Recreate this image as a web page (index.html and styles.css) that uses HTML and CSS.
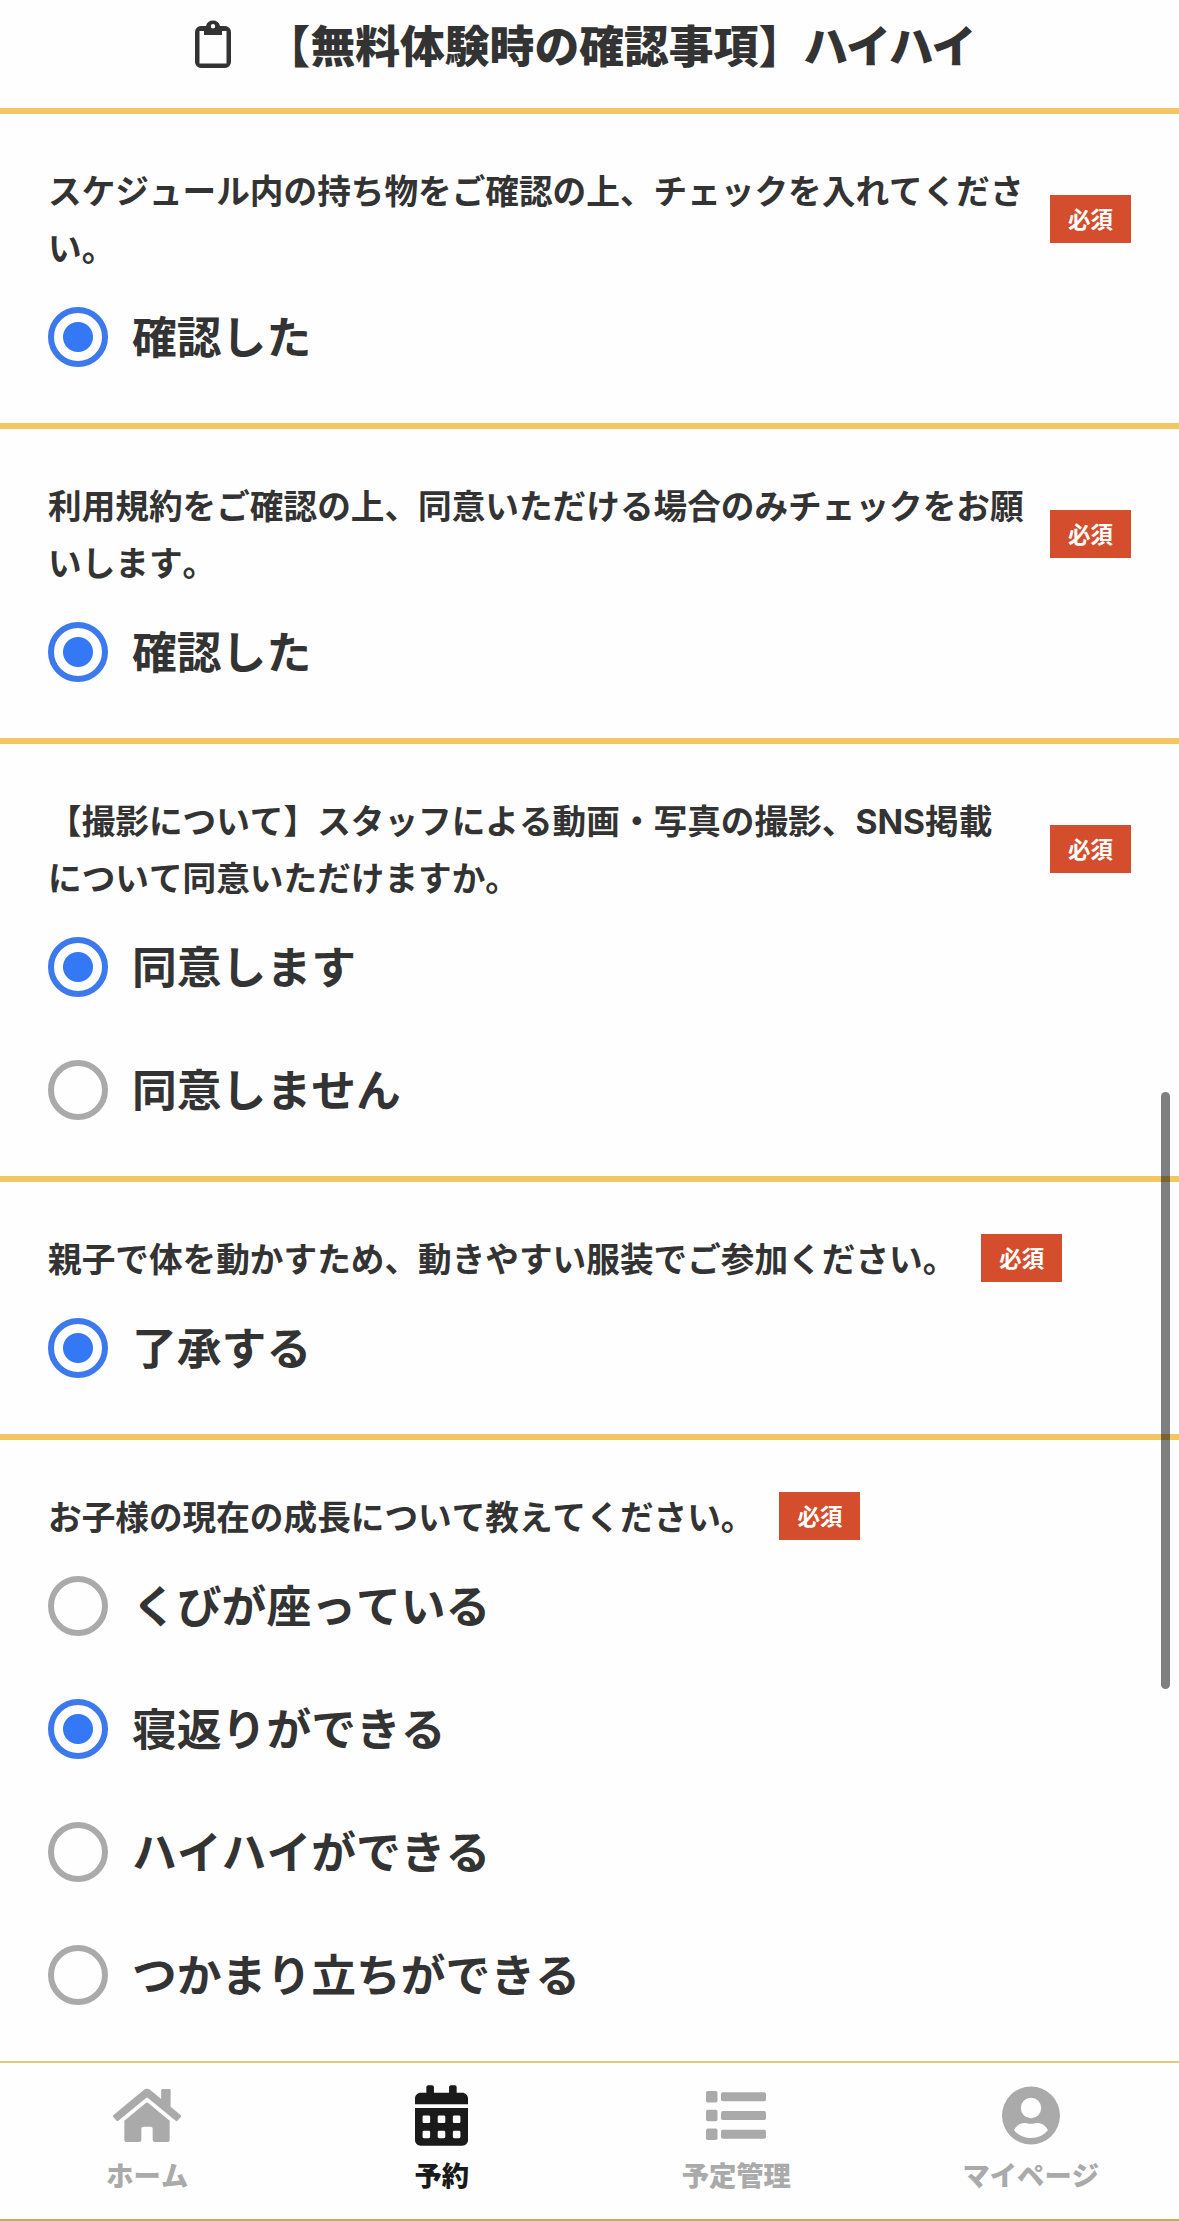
FILE: index.html
```html
<!DOCTYPE html>
<html lang="ja">
<head>
  <meta charset="UTF-8">
  <meta name="viewport" content="width=device-width, initial-scale=1.0">
  <title>無料体験時の確認事項</title>
  <link rel="stylesheet" href="styles.css">
</head>
<body>

  <header class="page-header">
    <svg class="clipboard" viewBox="0 0 36 50">
      <path d="M6 6H11A7.2 7.2 0 0 1 25 6H30A6 6 0 0 1 36 12V42A6 6 0 0 1 30 48H6A6 6 0 0 1 0 42V12A6 6 0 0 1 6 6ZM4.5 11V43.500H31.500V11H27V15H9V11ZM18 4A2.200 2.200 0 1 0 18 8.400A2.200 2.200 0 1 0 18 4Z" fill-rule="evenodd"/>
    </svg>
    <h1>【無料体験時の確認事項】<span class="kana">ハイハイ</span></h1>
  </header>

  <form class="survey">
    <!-- 持ち物 -->
    <section class="question">
      <div class="question-title">
        <p>スケジュール内の持ち物をご確認の上、チェックを入れてください。</p>
        <span class="required">必須</span>
      </div>
      <label class="option"><input type="radio" name="q1" checked><span>確認した</span></label>
    </section>

    <!-- 利用規約 -->
    <section class="question">
      <div class="question-title">
        <p>利用規約をご確認の上、同意いただける場合のみチェックをお願いします。</p>
        <span class="required">必須</span>
      </div>
      <label class="option"><input type="radio" name="q2" checked><span>確認した</span></label>
    </section>

    <!-- 撮影 -->
    <section class="question">
      <div class="question-title">
        <p>【撮影について】スタッフによる動画・写真の撮影、SNS掲載について同意いただけますか。</p>
        <span class="required">必須</span>
      </div>
      <label class="option"><input type="radio" name="q3" checked><span>同意します</span></label>
      <label class="option"><input type="radio" name="q3"><span>同意しません</span></label>
    </section>

    <!-- 服装 -->
    <section class="question">
      <div class="question-title">
        <p>親子で体を動かすため、動きやすい服装でご参加ください。</p>
        <span class="required">必須</span>
      </div>
      <label class="option"><input type="radio" name="q4" checked><span>了承する</span></label>
    </section>

    <!-- 成長 -->
    <section class="question">
      <div class="question-title">
        <p>お子様の現在の成長について教えてください。</p>
        <span class="required">必須</span>
      </div>
      <label class="option"><input type="radio" name="q5"><span>くびが座っている</span></label>
      <label class="option"><input type="radio" name="q5" checked><span>寝返りができる</span></label>
      <label class="option"><input type="radio" name="q5"><span>ハイハイができる</span></label>
      <label class="option"><input type="radio" name="q5"><span>つかまり立ちができる</span></label>
    </section>
  </form>

  <div class="scrollbar"></div>

  <nav class="tab-bar">
    <a class="tab">
      <svg class="icon-home" viewBox="0 0 576 512"><path d="M280.37 148.26L96 300.11V464a16 16 0 0 0 16 16l112.06-.29a16 16 0 0 0 15.92-16V368a16 16 0 0 1 16-16h64a16 16 0 0 1 16 16v95.64a16 16 0 0 0 16 16.05L464 480a16 16 0 0 0 16-16V300L295.67 148.26a12.19 12.19 0 0 0-15.3 0zM571.6 251.47L488 182.56V44.05a12 12 0 0 0-12-12h-56a12 12 0 0 0-12 12v72.61L318.47 43a48 48 0 0 0-61 0L4.34 251.47a12 12 0 0 0-1.6 16.9l25.5 31A12 12 0 0 0 45.15 301l235.22-193.74a12.19 12.19 0 0 1 15.3 0L530.9 301a12 12 0 0 0 16.9-1.6l25.5-31a12 12 0 0 0-1.7-16.93z"/></svg>
      <span>ホーム</span>
    </a>
    <a class="tab active">
      <svg class="icon-calendar" viewBox="0 0 448 512"><path d="M0 464c0 26.500 21.500 48 48 48h352c26.500 0 48-21.500 48-48V192H0v272zm320-196c0-6.600 5.400-12 12-12h40c6.600 0 12 5.400 12 12v40c0 6.600-5.400 12-12 12h-40c-6.600 0-12-5.400-12-12v-40zm0 128c0-6.600 5.400-12 12-12h40c6.600 0 12 5.400 12 12v40c0 6.600-5.400 12-12 12h-40c-6.600 0-12-5.400-12-12v-40zM192 268c0-6.600 5.400-12 12-12h40c6.600 0 12 5.400 12 12v40c0 6.600-5.400 12-12 12h-40c-6.600 0-12-5.400-12-12v-40zm0 128c0-6.600 5.400-12 12-12h40c6.600 0 12 5.400 12 12v40c0 6.600-5.400 12-12 12h-40c-6.600 0-12-5.400-12-12v-40zM64 268c0-6.600 5.400-12 12-12h40c6.600 0 12 5.400 12 12v40c0 6.600-5.400 12-12 12H76c-6.600 0-12-5.400-12-12v-40zm0 128c0-6.600 5.400-12 12-12h40c6.600 0 12 5.400 12 12v40c0 6.600-5.400 12-12 12H76c-6.600 0-12-5.400-12-12v-40zM400 64h-48V16c0-8.800-7.200-16-16-16h-32c-8.800 0-16 7.200-16 16v48H160V16c0-8.800-7.200-16-16-16h-32c-8.800 0-16 7.200-16 16v48H48C21.500 64 0 85.500 0 112v48h448v-48c0-26.500-21.500-48-48-48z"/></svg>
      <span>予約</span>
    </a>
    <a class="tab">
      <svg class="icon-list" viewBox="0 0 60 50">
        <rect x="0" y="0.500" width="11.500" height="11.500" rx="1.800"/>
        <rect x="0" y="19.300" width="11.500" height="11.500" rx="1.800"/>
        <rect x="0" y="38" width="11.500" height="11.500" rx="1.800"/>
        <rect x="15" y="1.800" width="45" height="9" rx="1.800"/>
        <rect x="15" y="20.600" width="45" height="9" rx="1.800"/>
        <rect x="15" y="39.300" width="45" height="9" rx="1.800"/>
      </svg>
      <span>予定管理</span>
    </a>
    <a class="tab">
      <svg class="icon-user" viewBox="0 0 58 58"><path fill-rule="evenodd" d="M29 0A29 29 0 1 0 29 58A29 29 0 1 0 29 0ZM29 11.300A10.200 10.200 0 1 1 29 31.700A10.200 10.200 0 1 1 29 11.300ZM12 43.500C14.500 39 18.500 36.500 22.500 36.500C25 36.500 26 37.300 29 37.300C32 37.300 33 36.500 35.500 36.500C39.500 36.500 43.500 39 46 43.500C42 48.700 36 51.500 29 51.500C22 51.500 16 48.700 12 43.500Z"/></svg>
      <span>マイページ</span>
    </a>
  </nav>

</body>
</html>
```
FILE: styles.css
```css
* {
  box-sizing: border-box;
}
body {
  margin: 0;
  height: 2221px;
  overflow: hidden;
  display: flex;
  flex-direction: column;
  font-family: "Noto Sans CJK JP", sans-serif;
  font-weight: 700;
  font-kerning: none;
  background-color: #fefefe;
  color: #333;
}
.page-header {
  display: flex;
  justify-content: center;
  height: 114px;
  padding: 20px 10px 0 0;
  border-bottom: 6px solid #f2c661;
  flex: none;
}
.clipboard {
  width: 36px;
  height: 50px;
  margin-right: 35px;
  fill: #333;
}
h1 {
  margin: -3px 0 0;
  font-size: 44.800px;
  font-weight: 900;
  line-height: 54px;
}
.kana {
  letter-spacing: -2px;
}
.survey {
  flex: 1;
  min-height: 0;
  overflow: hidden;
}
.question {
  padding: 48px 48px 56px;
  border-bottom: 6px solid #f2c661;
}
.question-title {
  display: flex;
  align-items: center;
  gap: 25px;
  margin-bottom: 31px;
}
.question-title p {
  margin: 1px 0 -1px;
  font-family: Inter, "Noto Sans CJK JP", sans-serif;
  font-size: 33.650px;
  line-height: 57px;
}
.required {
  flex: none;
  width: 81px;
  height: 48px;
  margin-bottom: 1px;
  background-color: #d44d2c;
  color: white;
  font-size: 22.500px;
  line-height: 46px;
  text-align: center;
}
.option {
  display: flex;
  align-items: center;
  height: 60px;
  font-size: 44.800px;
}
.option + .option {
  margin-top: 63px;
}
.option span {
  padding-bottom: 5px;
  line-height: 60px;
}
.option input {
  appearance: none;
  width: 60px;
  height: 60px;
  margin: 0 24px 0 0;
  border: 6px solid #aaa;
  border-radius: 50%;
}
.option input:checked {
  border-color: #3b79ec;
  background: radial-gradient(circle, #3478f6 14.500px, transparent 15.500px);
}
.scrollbar {
  position: absolute;
  top: 1092px;
  right: 9px;
  width: 9px;
  height: 597px;
  border-radius: 5px;
  background-color: rgba(0, 0, 0, 0.5);
}
.tab-bar {
  display: flex;
  flex: none;
  height: 160px;
  padding-right: 1px;
  border-top: 2px solid #e3c77c;
  border-bottom: 2px solid #c4a96c;
}
.tab {
  flex: 1;
  display: flex;
  flex-direction: column;
  align-items: center;
  padding-top: 22px;
  font-size: 27.300px;
  font-weight: 900;
  line-height: 36px;
  color: #aaa;
}
.tab.active {
  color: #1a1a1a;
}
.tab svg {
  height: 61px;
  margin-bottom: 10px;
  fill: currentColor;
}
.icon-home {
  width: 68px;
}
.icon-calendar {
  width: 53px;
}
.icon-list {
  width: 60px;
}
.icon-user {
  width: 58px;
}
```
